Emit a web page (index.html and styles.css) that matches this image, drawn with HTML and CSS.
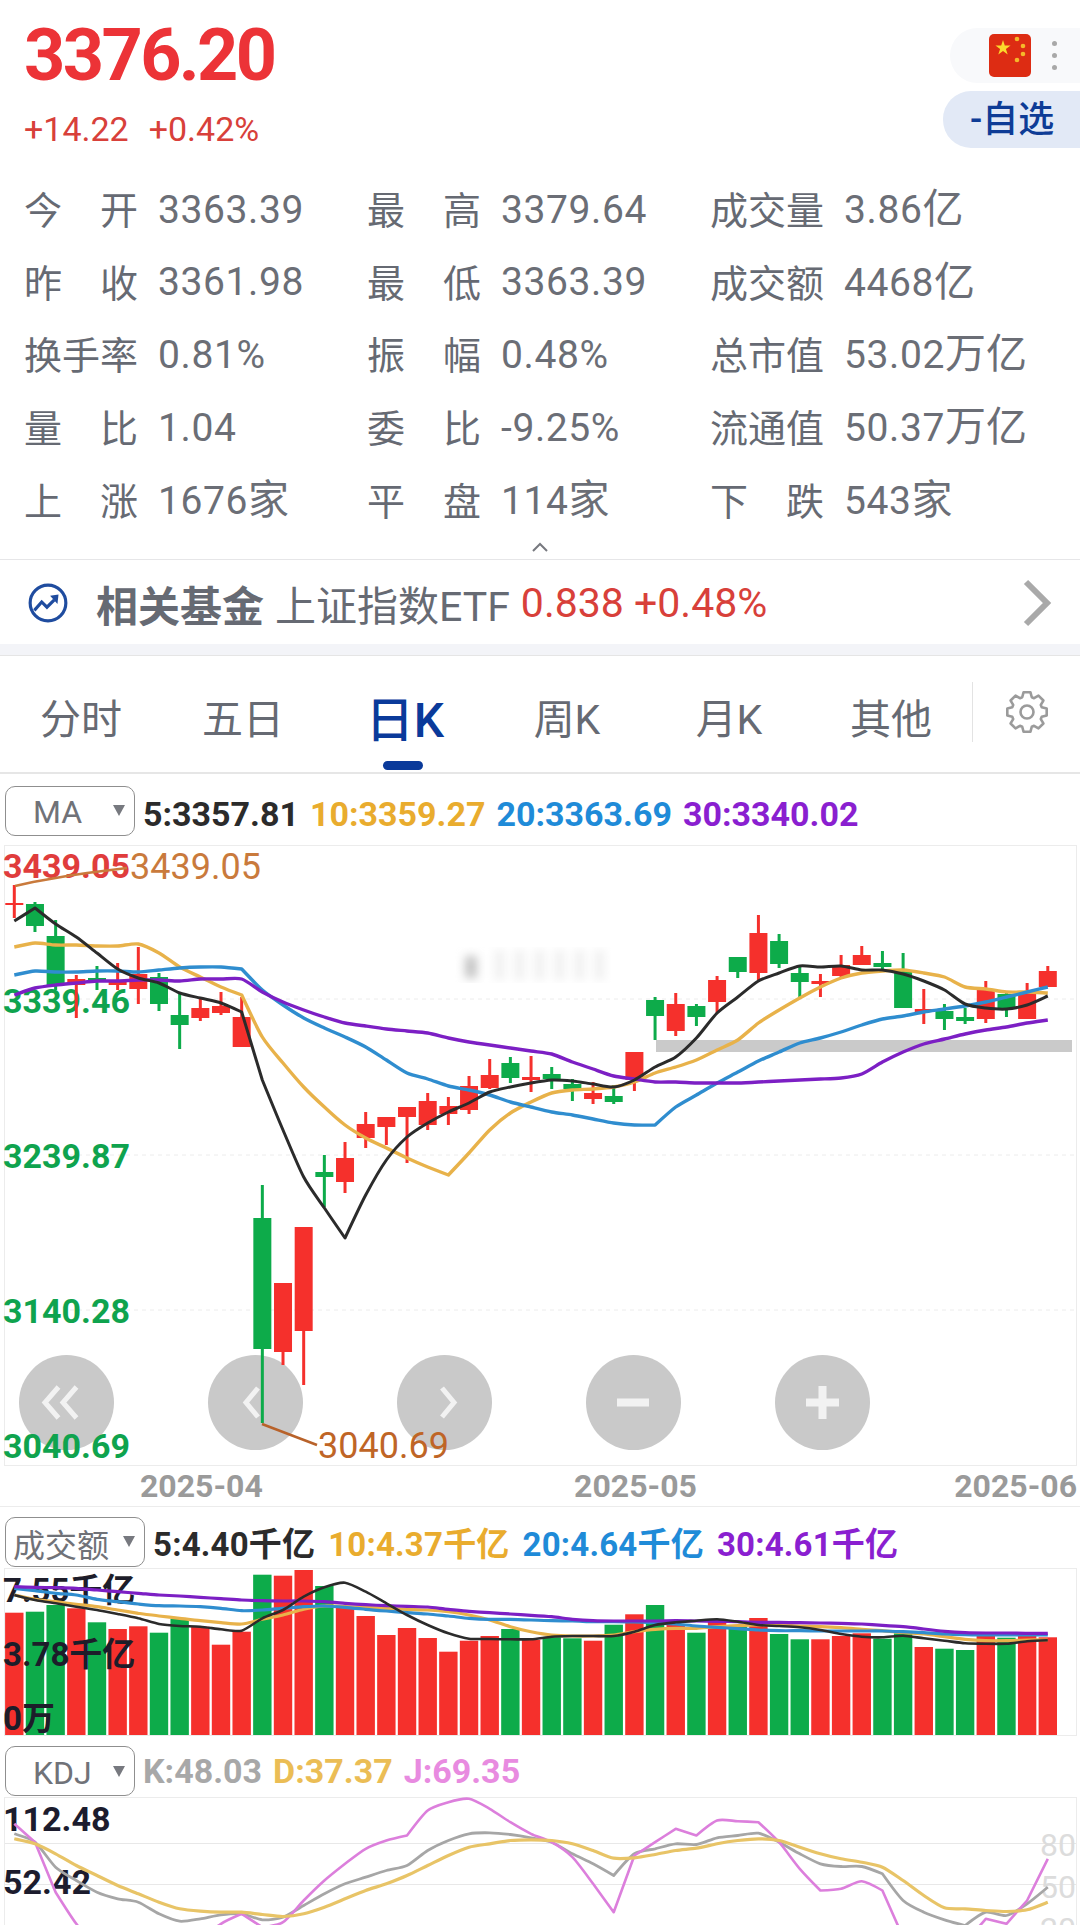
FILE: index.html
```html
<!DOCTYPE html>
<html lang="zh-CN">
<head>
    <meta charset="UTF-8">
    <meta name="viewport" content="width=device-width, initial-scale=1.0">
    <title>上证指数</title>
    <link rel="stylesheet" href="styles.css">
</head>
<body>
    <div class="page">
        <div class="title-clip">指数</div>

        <div class="quote-head">
            <div class="price-box">
                <div class="price">3376.20</div>
                <div class="change"><span>+14.22</span><span>+0.42%</span></div>
            </div>
            <div class="head-actions">
                <div class="flag-pill">
                    <svg class="flag" viewBox="0 0 42 43">
                        <rect width="42" height="43" rx="5" fill="#dd2c13"/>
                        <polygon points="14,6 15.8,11.6 21.6,11.5 16.9,14.9 18.7,20.5 14,17 9.3,20.5 11.1,14.9 6.4,11.5 12.2,11.6" fill="#fbd92c"/>
                        <circle cx="28" cy="5" r="2.3" fill="#f5b82a"/>
                        <circle cx="34" cy="12" r="2.3" fill="#f5b82a"/>
                        <circle cx="34" cy="20" r="2.3" fill="#f5b82a"/>
                        <circle cx="28" cy="26" r="2.3" fill="#f5b82a"/>
                    </svg>
                    <div class="more-dots"><i></i><i></i><i></i></div>
                </div>
                <div class="watch-pill">-自选</div>
            </div>
        </div>

        <div class="stat-grid">
            <div class="stat-item"><span class="stat-label">今 开</span><span class="stat-value">3363.39</span></div>
            <div class="stat-item"><span class="stat-label">最 高</span><span class="stat-value">3379.64</span></div>
            <div class="stat-item"><span class="stat-label">成交量</span><span class="stat-value">3.86<span class="unit">亿</span></span></div>
            <div class="stat-item"><span class="stat-label">昨 收</span><span class="stat-value">3361.98</span></div>
            <div class="stat-item"><span class="stat-label">最 低</span><span class="stat-value">3363.39</span></div>
            <div class="stat-item"><span class="stat-label">成交额</span><span class="stat-value">4468<span class="unit">亿</span></span></div>
            <div class="stat-item"><span class="stat-label">换手率</span><span class="stat-value">0.81%</span></div>
            <div class="stat-item"><span class="stat-label">振 幅</span><span class="stat-value">0.48%</span></div>
            <div class="stat-item"><span class="stat-label">总市值</span><span class="stat-value">53.02<span class="unit">万亿</span></span></div>
            <div class="stat-item"><span class="stat-label">量 比</span><span class="stat-value">1.04</span></div>
            <div class="stat-item"><span class="stat-label">委 比</span><span class="stat-value">-9.25%</span></div>
            <div class="stat-item"><span class="stat-label">流通值</span><span class="stat-value">50.37<span class="unit">万亿</span></span></div>
            <div class="stat-item"><span class="stat-label">上 涨</span><span class="stat-value">1676<span class="unit">家</span></span></div>
            <div class="stat-item"><span class="stat-label">平 盘</span><span class="stat-value">114<span class="unit">家</span></span></div>
            <div class="stat-item"><span class="stat-label">下 跌</span><span class="stat-value">543<span class="unit">家</span></span></div>
        </div>

        <div class="collapse-row">
            <svg width="18" height="10" viewBox="0 0 18 10"><polyline points="2,9 9,2 16,9" fill="none" stroke="#77797f" stroke-width="2"/></svg>
        </div>

        <div class="fund-row">
            <svg class="fund-icon" viewBox="-20 -20 40 40">
                <circle r="17" fill="none" stroke="#1f4c9f" stroke-width="3"/>
                <polyline points="-13,7 -6,-1 -1,4 6,-3" fill="none" stroke="#1f4c9f" stroke-width="3"/>
                <polygon points="2,-7 10,-8 9,1" fill="#1f4c9f"/>
            </svg>
            <span class="fund-title">相关基金</span>
            <span class="fund-name">上证指数ETF</span>
            <span class="fund-quote">0.838 +0.48%</span>
            <svg class="fund-arrow" viewBox="0 0 30 48"><polyline points="4,3 25,24 4,45" fill="none" stroke="#a9a9a9" stroke-width="6"/></svg>
        </div>
        <div class="gap-band"></div>

        <div class="tabs">
            <div class="tab">分时</div>
            <div class="tab">五日</div>
            <div class="tab active">日K</div>
            <div class="tab">周K</div>
            <div class="tab">月K</div>
            <div class="tab">其他</div>
            <div class="tab-tools">
                <svg width="48" height="48" viewBox="-24 -24 48 48">
                    <polygon points="-4.79,-14.74 -3.47,-19.7 3.47,-19.7 4.79,-14.74 7.04,-13.81 11.47,-16.38 16.38,-11.47 13.81,-7.04 14.74,-4.79 19.7,-3.47 19.7,3.47 14.74,4.79 13.81,7.04 16.38,11.47 11.47,16.38 7.04,13.81 4.79,14.74 3.47,19.7 -3.47,19.7 -4.79,14.74 -7.04,13.81 -11.47,16.38 -16.38,11.47 -13.81,7.04 -14.74,4.79 -19.7,3.47 -19.7,-3.47 -14.74,-4.79 -13.81,-7.04 -16.38,-11.47 -11.47,-16.38 -7.04,-13.81" fill="none" stroke="#9b9b9b" stroke-width="2.6" stroke-linejoin="round"/>
                    <circle r="6.5" fill="none" stroke="#9b9b9b" stroke-width="2.6"/>
                </svg>
            </div>
        </div>

        <div class="indicator-bar ma-bar">
            <div class="picker"><span>MA</span><i class="caret"></i></div>
            <div class="legend">
                <span class="c-black">5:3357.81</span>
                <span class="c-yellow">10:3359.27</span>
                <span class="c-blue">20:3363.69</span>
                <span class="c-purple">30:3340.02</span>
            </div>
        </div>

        <div class="chart-box main-chart">
            <div class="chart-nav">
                <div class="nav-btn"><svg viewBox="0 0 95 95"><polyline points="39.5,32 26,47.5 39.5,63"/><polyline points="57.5,32 44,47.5 57.5,63"/></svg></div>
                <div class="nav-btn"><svg viewBox="0 0 95 95"><polyline points="50,33 38,47.5 50,62"/></svg></div>
                <div class="nav-btn"><svg viewBox="0 0 95 95"><polyline points="45,33 57,47.5 45,62"/></svg></div>
                <div class="nav-btn"><svg viewBox="0 0 95 95"><line x1="31" y1="47.5" x2="63" y2="47.5"/></svg></div>
                <div class="nav-btn"><svg viewBox="0 0 95 95"><line x1="31" y1="47.5" x2="64" y2="47.5"/><line x1="47.5" y1="31" x2="47.5" y2="64"/></svg></div>
            </div>
            <svg id="mainChart" class="chart-svg" viewBox="5 846 1071 619"></svg>
        </div>

        <div class="x-axis">
            <span>2025-04</span>
            <span>2025-05</span>
            <span>2025-06</span>
        </div>

        <div class="indicator-bar vol-bar">
            <div class="picker wide"><span>成交额</span><i class="caret"></i></div>
            <div class="legend">
                <span class="c-black">5:4.40千亿</span>
                <span class="c-yellow">10:4.37千亿</span>
                <span class="c-blue">20:4.64千亿</span>
                <span class="c-purple">30:4.61千亿</span>
            </div>
        </div>

        <div class="chart-box vol-chart">
            <svg id="volChart" class="chart-svg" viewBox="5 1569 1071 166"></svg>
        </div>

        <div class="indicator-bar kdj-bar">
            <div class="picker"><span>KDJ</span><i class="caret"></i></div>
            <div class="legend">
                <span class="c-grey">K:48.03</span>
                <span class="c-gold">D:37.37</span>
                <span class="c-pink">J:69.35</span>
            </div>
        </div>

        <div class="chart-box kdj-chart">
            <svg id="kdjChart" class="chart-svg" viewBox="5 1798 1071 127"></svg>
        </div>
    </div>

    <script src="chart.js"></script>
</body>
</html>
```
FILE: styles.css
```css
* {
    margin: 0;
    padding: 0;
    box-sizing: border-box;
}

body {
    font-family: Roboto, "Noto Sans CJK SC", sans-serif;
    background: white;
    color: #666a73;
}

.page {
    position: relative;
    width: 1080px;
    height: 1925px;
    overflow: hidden;
}

.title-clip {
    position: absolute;
    top: -25px;
    left: 523px;
    font-size: 24px;
    line-height: 28px;
    color: #333;
}

.quote-head {
    display: flex;
    justify-content: space-between;
    height: 173px;
}

.price-box {
    padding: 20px 0 0 24px;
}

.price {
    font-size: 72px;
    line-height: 72px;
    font-weight: bold;
    letter-spacing: -2.6px;
    color: #ec3337;
}

.change {
    display: flex;
    gap: 20px;
    margin-top: 17px;
    font-size: 34px;
    line-height: 40px;
    color: #d8403a;
}

.head-actions {
    display: flex;
    flex-direction: column;
    align-items: flex-end;
    gap: 8px;
    padding-top: 28px;
}

.flag-pill {
    display: flex;
    align-items: center;
    width: 130px;
    height: 55px;
    padding-left: 39px;
    border-radius: 28px 0 0 28px;
    background: #f8f9fb;
}

.flag {
    width: 42px;
    height: 43px;
}

.more-dots {
    display: flex;
    flex-direction: column;
    gap: 7px;
    margin-left: 21px;
}

.more-dots i {
    display: block;
    width: 5px;
    height: 5px;
    border-radius: 50%;
    background: #a8a8a8;
}

.watch-pill {
    width: 137px;
    height: 57px;
    padding-left: 27px;
    border-radius: 28px 0 0 28px;
    background: #e2e9f6;
    color: #0e3c96;
    font-size: 36px;
    line-height: 58px;
    font-weight: 500;
}

.stat-grid {
    display: grid;
    grid-template-columns: 343px 343px 1fr;
    grid-auto-rows: 72.6px;
    padding-left: 24px;
}

.stat-item {
    display: flex;
    align-items: center;
}

.stat-label {
    width: 114px;
    margin-right: 20px;
    margin-top: -3px;
    font-size: 38px;
    text-align: justify;
    text-align-last: justify;
    color: #666a73;
}

.stat-value {
    margin-top: 1px;
    font-size: 39px;
    line-height: 46px;
    letter-spacing: 0.6px;
    color: #6b6e76;
    white-space: nowrap;
}

.stat-value .unit {
    font-size: 41px;
    letter-spacing: 0;
}

.collapse-row {
    display: flex;
    justify-content: center;
    align-items: flex-end;
    height: 24px;
    padding-bottom: 7px;
    border-bottom: 1px solid #e6e6e8;
}

.fund-row {
    display: flex;
    align-items: center;
    height: 84px;
    padding: 3px 28px 0 27px;
    font-size: 42px;
    white-space: nowrap;
}

.fund-icon {
    width: 42px;
    height: 42px;
    margin-right: 27px;
}

.fund-title {
    font-weight: bold;
    color: #666a73;
    margin-right: 11px;
}

.fund-name {
    font-size: 41px;
    color: #666a73;
    margin-right: 11px;
}

.fund-quote {
    font-size: 41px;
    color: #d8403a;
}

.fund-arrow {
    width: 30px;
    height: 48px;
    margin-left: auto;
}

.gap-band {
    height: 12px;
    background: #f3f4f8;
    border-bottom: 1px solid #e5e5e5;
}

.tabs {
    display: flex;
    align-items: center;
    height: 118px;
    padding-top: 4px;
    border-bottom: 2px solid #e6e6e6;
}

.tab {
    position: relative;
    width: 162px;
    font-size: 41px;
    text-align: center;
    color: #666a73;
}

.tab.active {
    color: #0a3a9a;
    font-size: 48px;
    font-weight: 500;
}

.tab.active::after {
    content: "";
    position: absolute;
    left: 59px;
    top: 80px;
    width: 40px;
    height: 9px;
    border-radius: 5px;
    background: #0a3a9a;
}

.tab-tools {
    display: flex;
    justify-content: center;
    align-items: center;
    flex: 1;
    height: 60px;
    margin-top: -8px;
    border-left: 1px solid #e3e3e3;
}

.indicator-bar {
    display: flex;
    align-items: center;
    padding-left: 5px;
}

.ma-bar {
    height: 71px;
    padding-top: 3px;
}

.vol-bar {
    height: 61px;
    padding-top: 9px;
}

.kdj-bar {
    height: 61px;
    padding-top: 10px;
}

.picker {
    display: flex;
    align-items: center;
    width: 130px;
    height: 50px;
    padding-left: 27px;
    border: 1.5px solid #8f8f8f;
    border-radius: 10px;
    font-size: 32px;
    color: #707278;
}

.picker span {
    margin-top: 3px;
}

.picker.wide {
    width: 140px;
    padding-left: 7px;
}

.picker .caret {
    margin-left: auto;
    margin-right: 9px;
    border-left: 6px solid transparent;
    border-right: 6px solid transparent;
    border-top: 11px solid #77797f;
}

.legend {
    display: flex;
    gap: 11px;
    margin-left: 8px;
    font-size: 34px;
    font-weight: bold;
    white-space: nowrap;
}

.ma-bar .legend {
    margin-top: 6px;
}

.vol-bar .legend {
    gap: 13px;
    font-size: 33px;
    letter-spacing: 0.2px;
}

.c-black { color: #2b2b2b; }
.c-yellow { color: #e9ac2e; }
.c-blue { color: #1f8bd8; }
.c-purple { color: #8a1fd0; }
.c-grey { color: #a8a8a8; }
.c-gold { color: #ebbd55; }
.c-pink { color: #e88be0; }

.chart-box {
    position: relative;
    width: 1073px;
    margin-left: 4px;
    border: 1px solid #ececec;
}

.main-chart { height: 621px; }
.vol-chart { height: 168px; }
.kdj-chart { height: 129px; border-bottom: none; }

.chart-svg {
    position: relative;
    display: block;
    width: 100%;
    height: 100%;
    overflow: visible;
}

.chart-nav {
    position: absolute;
    left: 14px;
    top: 509px;
    display: flex;
    gap: 94px;
}

.nav-btn {
    width: 95px;
    height: 95px;
    border-radius: 50%;
    background: #c9c9c9;
}

.nav-btn svg {
    display: block;
    fill: none;
    stroke: #f2f2f2;
    stroke-width: 5;
}

.nav-btn svg line {
    stroke-width: 8;
}

.x-axis {
    display: flex;
    justify-content: space-between;
    height: 41px;
    padding: 0 3px 0 140px;
    border-bottom: 1px solid #ececec;
    font-size: 32px;
    line-height: 41px;
    font-weight: bold;
    color: #9a9a9a;
}

.x-axis span:nth-child(2) {
    margin-left: 54px;
}

.axis-green { font-size: 34px; font-weight: bold; fill: #0fa34e; }
.axis-red { font-size: 34px; font-weight: bold; fill: #e03c3c; }
.extreme-high { font-size: 36px; fill: #c97a3c; }
.extreme-low { font-size: 36px; fill: #bf6526; }
.axis-dark { font-size: 33px; font-weight: bold; fill: #1d1d2a; }
.axis-kdj { font-size: 34px; font-weight: bold; fill: #1c1c2e; }
.axis-faint { font-size: 32px; fill: #dcdcdc; }
```
FILE: chart.js
```js
const SVG_NS = 'http://www.w3.org/2000/svg';
const RED = '#f5302c';
const GREEN = '#0dab4a';

function add(parent, name, attrs, text) {
    const el = document.createElementNS(SVG_NS, name);
    for (const key in attrs) el.setAttribute(key, attrs[key]);
    if (text) el.textContent = text;
    parent.appendChild(el);
    return el;
}

// x of the i-th trading day
function dayX(i) {
    return 14.3 + 20.67 * i;
}

// slope at a point, zero where the line turns hard so the corner stays sharp
function tangent(pts, i) {
    const prev = pts[Math.max(i - 1, 0)];
    const next = pts[Math.min(i + 1, pts.length - 1)];
    const here = pts[i];
    if (Math.abs((here[1] - prev[1]) - (next[1] - here[1])) >= 18) return [0, 0];
    return [(next[0] - prev[0]) / 8, (next[1] - prev[1]) / 8];
}

function drawLine(svg, ys, color, width) {
    const pts = ys.map((y, i) => [dayX(i), y]);
    let d = 'M' + pts[0][0].toFixed(1) + ' ' + pts[0][1];
    for (let i = 0; i < pts.length - 1; i++) {
        const t1 = tangent(pts, i);
        const t2 = tangent(pts, i + 1);
        const a = pts[i];
        const b = pts[i + 1];
        d += ' C' + (a[0] + t1[0]).toFixed(1) + ' ' + (a[1] + t1[1]).toFixed(1) +
            ' ' + (b[0] - t2[0]).toFixed(1) + ' ' + (b[1] - t2[1]).toFixed(1) +
            ' ' + b[0].toFixed(1) + ' ' + b[1];
    }
    add(svg, 'path', { d: d, fill: 'none', stroke: color, 'stroke-width': width, 'stroke-linejoin': 'round' });
}

// ---------- K line ----------
// [wick top, body top, body bottom, wick bottom, colour]
const candles = [
    [885, 903, 905, 918, 'r'], [902, 904, 926, 932, 'g'], [920, 936, 985, 990, 'g'],
    [975, 979, 985, 1018, 'r'], [966, 978, 980, 990, 'g'], [963, 980, 985, 990, 'r'],
    [947, 974, 989, 1004, 'r'], [973, 977, 1004, 1011, 'g'], [993, 1015, 1025, 1049, 'g'],
    [997, 1008, 1018, 1021, 'r'], [992, 1006, 1013, 1015, 'r'], [997, 1017, 1047, 1047, 'r'],
    [1185, 1218, 1349, 1423, 'g'], [1283, 1283, 1352, 1365, 'r'], [1227, 1227, 1331, 1385, 'r'],
    [1155, 1172, 1177, 1207, 'g'], [1142, 1158, 1182, 1193, 'r'], [1112, 1124, 1138, 1148, 'r'],
    [1117, 1117, 1127, 1145, 'r'], [1107, 1107, 1117, 1163, 'r'], [1093, 1101, 1125, 1130, 'r'],
    [1097, 1106, 1114, 1125, 'r'], [1076, 1086, 1110, 1114, 'r'], [1059, 1075, 1088, 1089, 'r'],
    [1057, 1063, 1078, 1083, 'g'], [1056, 1077, 1080, 1092, 'r'], [1067, 1074, 1079, 1089, 'g'],
    [1079, 1084, 1089, 1101, 'g'], [1082, 1093, 1099, 1104, 'r'], [1085, 1096, 1102, 1104, 'g'],
    [1052, 1052, 1080, 1091, 'r'], [997, 1000, 1016, 1040, 'g'], [993, 1004, 1031, 1036, 'r'],
    [1004, 1006, 1017, 1026, 'g'], [976, 980, 1002, 1013, 'r'], [957, 957, 972, 978, 'g'],
    [915, 933, 973, 980, 'r'], [934, 941, 964, 968, 'g'], [965, 973, 982, 997, 'g'],
    [974, 981, 984, 997, 'r'], [955, 965, 976, 979, 'r'], [946, 955, 965, 965, 'r'],
    [951, 963, 967, 970, 'g'], [953, 970, 1008, 1008, 'g'], [989, 1009, 1012, 1024, 'r'],
    [1004, 1011, 1019, 1030, 'g'], [1008, 1017, 1021, 1024, 'g'], [981, 989, 1019, 1023, 'r'],
    [993, 994, 1008, 1017, 'g'], [983, 993, 1019, 1019, 'r'], [966, 971, 987, 987, 'r']
];

const ma5 = [921, 908, 924, 937, 953, 969, 978, 983, 993, 998, 1003, 1012, 1080, 1130, 1177, 1208, 1238,
    1195, 1160, 1137, 1123, 1112, 1103, 1092, 1087, 1083, 1080, 1081, 1084, 1087, 1080, 1067, 1057, 1038,
    1013, 997, 981, 973, 966, 967, 966, 970, 970, 974, 981, 990, 1004, 1008, 1009, 1005, 996];
const ma10 = [947, 943, 945, 945, 946, 946, 944, 953, 967, 977, 987, 995, 1037, 1063, 1087, 1107, 1125,
    1138, 1148, 1158, 1167, 1175, 1153, 1130, 1113, 1102, 1093, 1090, 1089, 1087, 1082, 1073, 1067, 1060,
    1050, 1040, 1023, 1010, 998, 987, 978, 973, 971, 970, 973, 977, 987, 989, 992, 992, 993];
const ma20 = [975, 971, 972, 972, 971, 971, 972, 970, 968, 967, 967, 969, 990, 1005, 1018, 1028, 1037,
    1047, 1060, 1073, 1079, 1086, 1090, 1095, 1102, 1107, 1112, 1115, 1119, 1123, 1125, 1125, 1107, 1095,
    1083, 1072, 1061, 1052, 1043, 1038, 1032, 1025, 1019, 1016, 1012, 1009, 1006, 1002, 997, 992, 987];
const ma30 = [995, 988, 985, 983, 981, 981, 980, 980, 981, 979, 979, 979, 992, 1002, 1010, 1017, 1023,
    1026, 1029, 1031, 1033, 1038, 1042, 1045, 1048, 1051, 1054, 1062, 1069, 1076, 1079, 1082, 1082, 1083,
    1083, 1083, 1082, 1081, 1080, 1079, 1078, 1074, 1062, 1052, 1044, 1039, 1034, 1030, 1027, 1023, 1020];

function drawMainChart() {
    const svg = document.getElementById('mainChart');

    [999, 1155, 1310].forEach(y => {
        add(svg, 'line', { x1: 70, y1: y, x2: 1075, y2: y, stroke: '#ececec', 'stroke-width': 1, 'stroke-dasharray': '4 4' });
    });

    // blurred watermark in the middle of the chart
    const defs = add(svg, 'defs', {});
    const blur = add(defs, 'filter', { id: 'soft' });
    add(blur, 'feGaussianBlur', { stdDeviation: 5 });
    const mark = add(svg, 'g', { filter: 'url(#soft)' });
    add(mark, 'rect', { x: 465, y: 956, width: 12, height: 22, fill: '#c4c4c4' });
    [495, 515, 535, 555, 575, 595].forEach(x => {
        add(mark, 'rect', { x: x, y: 950, width: 9, height: 30, fill: '#efefef' });
    });

    add(svg, 'rect', { x: 656, y: 1040, width: 416, height: 12, fill: '#cacaca' });

    const axis = [['3339.46', 1013], ['3239.87', 1168], ['3140.28', 1323], ['3040.69', 1458]];
    axis.forEach(a => add(svg, 'text', { x: 3, y: a[1], class: 'axis-green' }, a[0]));
    add(svg, 'text', { x: 3, y: 878, class: 'axis-red' }, '3439.05');

    candles.forEach((c, i) => {
        const x = dayX(i);
        const color = c[4] === 'r' ? RED : GREEN;
        add(svg, 'line', { x1: x, y1: c[0], x2: x, y2: c[3], stroke: color, 'stroke-width': 3 });
        add(svg, 'rect', { x: x - 9, y: c[1], width: 18, height: c[2] - c[1], fill: color });
    });

    drawLine(svg, ma10, '#e8b24a', 3.4);
    drawLine(svg, ma20, '#2f8dcf', 3.4);
    drawLine(svg, ma30, '#7c1fc4', 3.4);
    drawLine(svg, ma5, '#2b2b2b', 3);

    add(svg, 'polyline', { points: '15,886 33,882 67,876 87,873 127,868', fill: 'none', stroke: '#c97a3c', 'stroke-width': 2.5 });
    add(svg, 'polyline', { points: '262,1424 317,1445', fill: 'none', stroke: '#b8622a', 'stroke-width': 2.5 });
    add(svg, 'text', { x: 130, y: 879, class: 'extreme-high' }, '3439.05');
    add(svg, 'text', { x: 318, y: 1458, class: 'extreme-low' }, '3040.69');
}

// ---------- volume and KDJ, y values kept in thirds of a pixel from y=1500 ----------
const third = v => +(1500 + v / 3).toFixed(1);

const volTops = [338, 335, 315, 325, 367, 387, 379, 398, 357, 380, 434, 395, 224, 227, 210, 258, 322, 348,
    405, 384, 414, 455, 422, 408, 387, 420, 412, 415, 422, 374, 343, 315, 375, 398, 358, 380, 354, 402, 418,
    418, 408, 400, 416, 400, 441, 446, 450, 407, 413, 405, 412];
const volUp = [1, 0, 0, 1, 0, 1, 1, 0, 0, 1, 1, 1, 0, 1, 1, 0, 1, 1, 1, 1, 1, 1, 1, 1, 0, 1, 0, 0, 1, 0, 1, 0,
    1, 0, 1, 0, 1, 0, 0, 1, 1, 1, 0, 0, 1, 0, 0, 1, 0, 1, 1];

const volMa5 = [285, 300, 310, 320, 330, 342, 355, 372, 378, 380, 388, 392, 355, 330, 290, 262, 248, 275, 310,
    345, 375, 400, 416, 417, 418, 418, 410, 408, 408, 408, 395, 375, 367, 362, 358, 365, 375, 378, 382, 390,
    402, 410, 412, 407, 415, 422, 430, 431, 431, 424, 421];
const volMa10 = [285, 298, 305, 313, 320, 330, 340, 348, 355, 362, 368, 372, 358, 345, 328, 318, 320, 322, 325,
    328, 330, 335, 345, 360, 380, 395, 405, 408, 408, 405, 395, 388, 385, 385, 380, 377, 375, 375, 378, 380,
    383, 388, 392, 398, 402, 410, 418, 422, 422, 420, 420];
const volMa20 = [265, 272, 280, 285, 298, 305, 312, 317, 318, 320, 325, 332, 330, 325, 320, 318, 322, 328, 333,
    338, 342, 348, 355, 358, 358, 360, 362, 363, 365, 365, 366, 368, 372, 378, 382, 386, 390, 392, 392, 393,
    393, 393, 393, 395, 398, 402, 404, 405, 405, 405, 405];
const volMa30 = [260, 262, 263, 265, 270, 275, 280, 285, 288, 292, 296, 300, 302, 303, 303, 305, 310, 314, 317,
    319, 321, 328, 334, 338, 342, 346, 350, 358, 362, 363, 363, 363, 362, 363, 364, 365, 367, 367, 368, 369,
    370, 372, 376, 380, 387, 394, 398, 399, 399, 400, 400];

function drawVolChart() {
    const svg = document.getElementById('volChart');
    const base = 1735;

    volTops.forEach((top, i) => {
        const y = third(top);
        add(svg, 'rect', {
            x: dayX(i) - 9.2,
            y: y,
            width: 18.4,
            height: base - y,
            fill: volUp[i] ? RED : GREEN
        });
    });

    add(svg, 'text', { x: 3, y: 1602, class: 'axis-dark' }, '7.55千亿');
    add(svg, 'text', { x: 3, y: 1666, class: 'axis-dark' }, '3.78千亿');
    add(svg, 'text', { x: 3, y: 1730, class: 'axis-dark' }, '0万');

    drawLine(svg, volMa10.map(third), '#e8b24a', 3.2);
    drawLine(svg, volMa20.map(third), '#2f8dcf', 3.2);
    drawLine(svg, volMa30.map(third), '#7c1fc4', 3.2);
    drawLine(svg, volMa5.map(third), '#2b2b2b', 2.6);
}

const kLine = [1000, 1025, 1100, 1140, 1175, 1195, 1205, 1240, 1262, 1255, 1243, 1240, 1258, 1250, 1215, 1180,
    1150, 1130, 1110, 1095, 1050, 1020, 1000, 997, 1002, 1012, 1025, 1060, 1090, 1125, 1060, 1045, 1030, 1032,
    1012, 1005, 998, 1025, 1060, 1090, 1098, 1098, 1120, 1200, 1235, 1258, 1275, 1235, 1245, 1210, 1160];
const dLine = [1015, 1030, 1060, 1095, 1125, 1155, 1180, 1205, 1225, 1232, 1235, 1235, 1242, 1248, 1240, 1220,
    1195, 1170, 1150, 1125, 1095, 1065, 1040, 1030, 1020, 1018, 1020, 1030, 1050, 1073, 1072, 1062, 1050, 1043,
    1030, 1020, 1015, 1020, 1040, 1060, 1075, 1085, 1100, 1140, 1185, 1222, 1225, 1230, 1233, 1228, 1205];
const jLine = [970, 1025, 1175, 1270, 1340, 1400, 1420, 1430, 1400, 1320, 1270, 1240, 1280, 1265, 1200, 1140,
    1090, 1045, 1020, 1005, 930, 905, 895, 925, 965, 1000, 1025, 1070, 1150, 1235, 1065, 1025, 985, 1005, 960,
    962, 965, 1025, 1105, 1170, 1165, 1142, 1170, 1310, 1350, 1340, 1320, 1255, 1270, 1200, 1075];

function drawKdjChart() {
    const svg = document.getElementById('kdjChart');

    [1843, 1884].forEach(y => {
        add(svg, 'line', { x1: 5, y1: y, x2: 1076, y2: y, stroke: '#e8e8e8', 'stroke-width': 1 });
    });

    add(svg, 'text', { x: 1040, y: 1855, class: 'axis-faint' }, '80');
    add(svg, 'text', { x: 1040, y: 1897, class: 'axis-faint' }, '50');
    add(svg, 'text', { x: 1040, y: 1939, class: 'axis-faint' }, '20');
    add(svg, 'text', { x: 3, y: 1830, class: 'axis-kdj' }, '112.48');
    add(svg, 'text', { x: 3, y: 1893, class: 'axis-kdj' }, '52.42');

    drawLine(svg, kLine.map(third), '#a6a6a6', 2.8);
    drawLine(svg, jLine.map(third), '#dc7fdc', 2.6);
    drawLine(svg, dLine.map(third), '#e8c467', 3.2);
}

drawMainChart();
drawVolChart();
drawKdjChart();
```
